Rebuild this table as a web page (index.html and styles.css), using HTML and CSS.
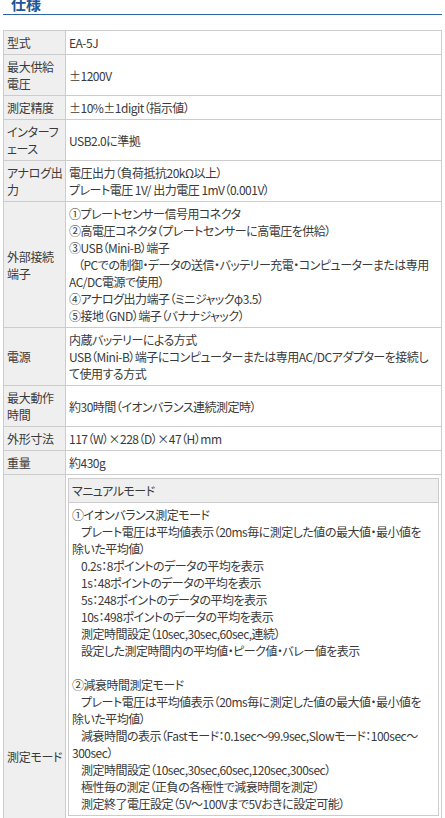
FILE: index.html
```html
<!DOCTYPE html>
<html lang="ja">
<head>
<meta charset="utf-8">
<title>仕様</title>
<link rel="stylesheet" href="styles.css">
</head>
<body>
<div class="page">
  <h2 class="title">仕様</h2>
  <table class="spec">
    <colgroup><col class="col-label"><col></colgroup>
    <tr><th>型式</th><td>EA-5J</td></tr>
    <tr><th>最大供給<br>電圧</th><td>±1200V</td></tr>
    <tr><th>測定精度</th><td>±10%±1digit（指示値）</td></tr>
    <tr><th>インターフ<br>ェース</th><td>USB2.0に準拠</td></tr>
    <tr><th>アナログ出<br>力</th><td>電圧出力（負荷抵抗20kΩ以上）<br>プレート電圧 1V/ 出力電圧 1mV（0.001V）</td></tr>
    <tr><th>外部接続<br>端子</th><td>
      <div>①プレートセンサー信号用コネクタ</div>
      <div>②高電圧コネクタ（プレートセンサーに高電圧を供給）</div>
      <div>③USB（Mini-B）端子</div>
      <div class="ind">（PCでの制御・データの送信・バッテリー充電・コンピューターまたは専用<br>AC/DC電源で使用）</div>
      <div>④アナログ出力端子（ミニジャックφ3.5）</div>
      <div>⑤接地（GND）端子（バナナジャック）</div>
    </td></tr>
    <tr><th>電源</th><td>
      <div>内蔵バッテリーによる方式</div>
      <div>USB（Mini-B）端子にコンピューターまたは専用AC/DCアダプターを接続し<br>て使用する方式</div>
    </td></tr>
    <tr><th>最大動作<br>時間</th><td>約30時間（イオンバランス連続測定時）</td></tr>
    <tr><th>外形寸法</th><td>117（W）×228（D）×47（H）mm</td></tr>
    <tr><th>重量</th><td>約430g</td></tr>
    <tr><th>測定モード</th><td class="modes">
      <div class="mode-box">
        <div class="mode-head">マニュアルモード</div>
        <div class="mode-body">
          <div>①イオンバランス測定モード</div>
          <div class="ind">プレート電圧は平均値表示（20ms毎に測定した値の最大値・最小値を<br>除いた平均値）</div>
          <div class="ind">0.2s：8ポイントのデータの平均を表示</div>
          <div class="ind">1s：48ポイントのデータの平均を表示</div>
          <div class="ind">5s：248ポイントのデータの平均を表示</div>
          <div class="ind">10s：498ポイントのデータの平均を表示</div>
          <div class="ind">測定時間設定（10sec,30sec,60sec,連続）</div>
          <div class="ind">設定した測定時間内の平均値・ピーク値・バレー値を表示</div>
          <div class="blank">&nbsp;</div>
          <div>②減衰時間測定モード</div>
          <div class="ind">プレート電圧は平均値表示（20ms毎に測定した値の最大値・最小値を<br>除いた平均値）</div>
          <div class="ind">減衰時間の表示（Fastモード：0.1sec～99.9sec,Slowモード：100sec～<br>300sec）</div>
          <div class="ind">測定時間設定（10sec,30sec,60sec,120sec,300sec）</div>
          <div class="ind">極性毎の測定（正負の各極性で減衰時間を測定）</div>
          <div class="ind">測定終了電圧設定（5V～100Vまで5Vおきに設定可能）</div>
        </div>
      </div>
    </td></tr>
  </table>
</div>
</body>
</html>
```

FILE: styles.css
```css
html, body {
  margin: 0;
  padding: 0;
  background: #ffffff;
}

body {
  font-family: "Noto Sans CJK JP", "Noto Sans", sans-serif;
  font-size: 12px;
  line-height: 17px;
  color: #3a3a3a;
  font-feature-settings: "palt" 1;
}

.page {
  padding: 0 3px;
}

.title {
  margin: -5px 0 15px;
  padding: 0 0 1px 8px;
  font-size: 15px;
  line-height: 18px;
  font-weight: bold;
  color: #1c5798;
  border-bottom: 1px solid #2d66a8;
}

.spec {
  width: 100%;
  border-collapse: collapse;
  table-layout: fixed;
}

.col-label {
  width: 62px;
}

.spec th,
.spec td {
  border: 1px solid #cccccc;
  padding: 3px 3px;
  text-align: left;
  font-weight: normal;
  vertical-align: middle;
}

.spec th {
  background: #efefef;
  white-space: nowrap;
  letter-spacing: -0.3px;
}

.spec td {
  letter-spacing: -0.5px;
}

.ind {
  text-indent: 9px;
}

.spec td.modes {
  padding: 3px 2px 221px;
}

.mode-box {
  border: 1px solid #cccccc;
}

.mode-head {
  background: #efefef;
  border-bottom: 1px solid #cccccc;
  padding: 3px 3px;
}

.mode-body {
  padding: 3px 3px;
}
```
